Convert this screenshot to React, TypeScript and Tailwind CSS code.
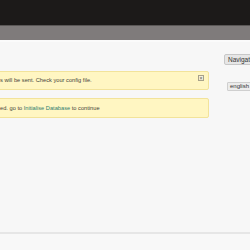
export default function App() {
  return (
    <div className="h-[250px] w-[250px] overflow-hidden bg-[#f7f7f7] font-['Liberation_Sans',Arial,sans-serif]">
      <div className="h-[25px] bg-[#1c1a19]" />
      <div className="h-[15px] border-t border-[#5a5756] bg-[#7f7b7b]" />
      <div className="h-[2px] bg-[#fbfbfb]" />
      <div className="flex h-[190px]">
        <div className="ml-[-120px] flex w-[329px] shrink-0 flex-col gap-[8px] pt-[29px]">
          <div className="relative flex h-[19px] items-center rounded-[2px] border border-[#f2e39a] bg-[#fff6c2] pl-[119px] text-[5.7px] text-[#45453a]">
            <span>s will be sent. Check your config file.</span>
            <span className="absolute right-[4px] top-[3px] flex h-[6px] w-[6px] items-center justify-center border border-[#a8a28a] bg-[#f4efd8] text-[5px] leading-none text-[#555]">
              ×
            </span>
          </div>
          <div className="flex h-[20px] items-center rounded-[2px] border border-[#f2e39a] bg-[#fff6c2] pl-[119px] text-[5.7px] text-[#45453a]">
            <span>
              ed. go to <span className="text-[#2e7d6e]">Initialise Database</span> to continue
            </span>
          </div>
        </div>
        <div className="ml-[15px] flex shrink-0 flex-col gap-[17px] pt-[12px]">
          <div className="flex h-[11px] items-center rounded-[2px] border border-[#c8c8c8] bg-[#e6e6e6] px-[3px] text-[6.5px] text-[#333]">
            Navigation
          </div>
          <div className="ml-[3px] flex h-[9px] items-center rounded-[1px] border border-[#cfcfcf] bg-[#ececec] px-[2px] text-[6px] text-[#333]">
            english
          </div>
        </div>
      </div>
      <div className="h-[2px] bg-[#e6e6e6]" />
      <div className="h-[16px] bg-[#f8f8f8]" />
    </div>
  );
}
